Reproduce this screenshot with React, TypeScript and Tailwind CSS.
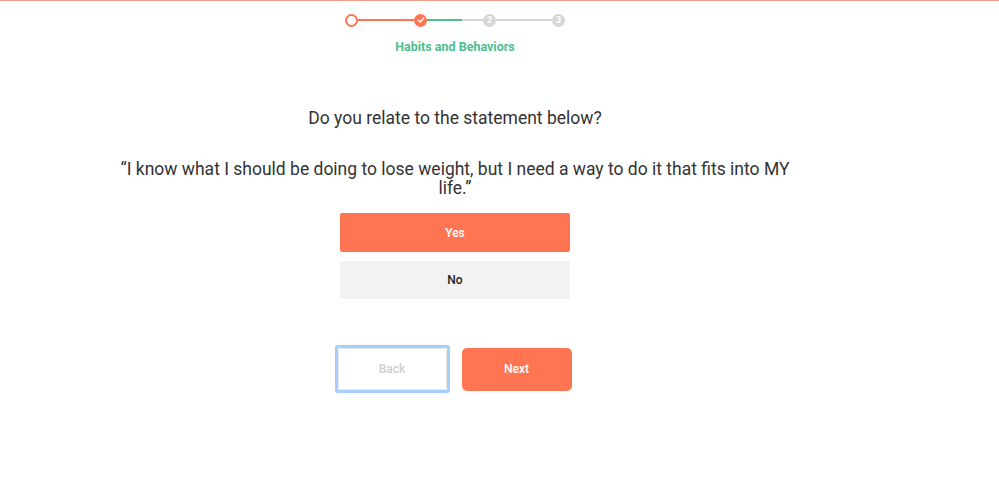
import React from "react";

function Stepper() {
  return (
    <div className="flex items-center h-[14px]">
      <div className="w-[13px] h-[13px] rounded-full border-2 border-[#ff7552] bg-white box-border" />
      <div className="w-[56px] h-[2px] bg-[#ff7552]" />
      <div className="w-[13px] h-[13px] rounded-full bg-[#ff7552] flex items-center justify-center">
        <svg width="8" height="8" viewBox="0 0 8 8">
          <path d="M1.2 4.2 L3.2 6 L6.8 2" stroke="white" strokeWidth="1.5" fill="none" strokeLinecap="round" strokeLinejoin="round" />
        </svg>
      </div>
      <div className="w-[35px] h-[2px] bg-[#4cbf8f]" />
      <div className="w-[21px] h-[2px] bg-[#d6d6d6]" />
      <div className="w-[13px] h-[13px] rounded-full bg-[#d6d6d6] flex items-center justify-center text-white text-[9px] font-bold leading-none">2</div>
      <div className="w-[56px] h-[2px] bg-[#d6d6d6]" />
      <div className="w-[13px] h-[13px] rounded-full bg-[#d6d6d6] flex items-center justify-center text-white text-[9px] font-bold leading-none">3</div>
    </div>
  );
}

export default function App() {
  return (
    <div className="w-[999px] h-[492px] bg-white border-t border-[#f0a08a]" style={{ fontFamily: "Roboto, 'Liberation Sans', sans-serif" }}>
      <div className="w-[910px] flex flex-col items-center">
        <div className="mt-[12px]">
          <Stepper />
        </div>
        <div className="mt-[12px] text-[12.5px] leading-[16px] font-bold text-[#4cbf8f]">Habits and Behaviors</div>
        <div className="mt-[53px] text-[17.5px] leading-[20px] text-[#333333]">Do you relate to the statement below?</div>
        <div className="mt-[32px] w-[680px] text-center text-[17.5px] leading-[19px] text-[#333333]">
          “I know what I should be doing to lose weight, but I need a way to do it that fits into MY life.”
        </div>
        <div className="mt-[15px] flex flex-col gap-[9px]">
          <button className="w-[230px] h-[39px] rounded-[2px] bg-[#ff7552] text-white text-[12px] font-medium">Yes</button>
          <button className="w-[230px] h-[38px] rounded-[2px] bg-[#f2f2f2] text-[#222] text-[12px] font-medium">No</button>
        </div>
        <div className="mt-[46px] mr-[4px] flex items-center gap-[12px]">
          <div className="w-[115px] h-[48px] rounded-[3px] border-[3px] border-[#a7cdfb] bg-white text-[#cfcfcf] text-[12px] font-medium box-border">
            <div className="w-full h-full rounded-[3px] border border-[#e6e6e6] flex items-center justify-center">Back</div>
          </div>
          <div className="w-[110px] h-[43px] rounded-[5px] bg-[#ff7552] text-white text-[12px] font-medium flex items-center justify-center">Next</div>
        </div>
      </div>
    </div>
  );
}
